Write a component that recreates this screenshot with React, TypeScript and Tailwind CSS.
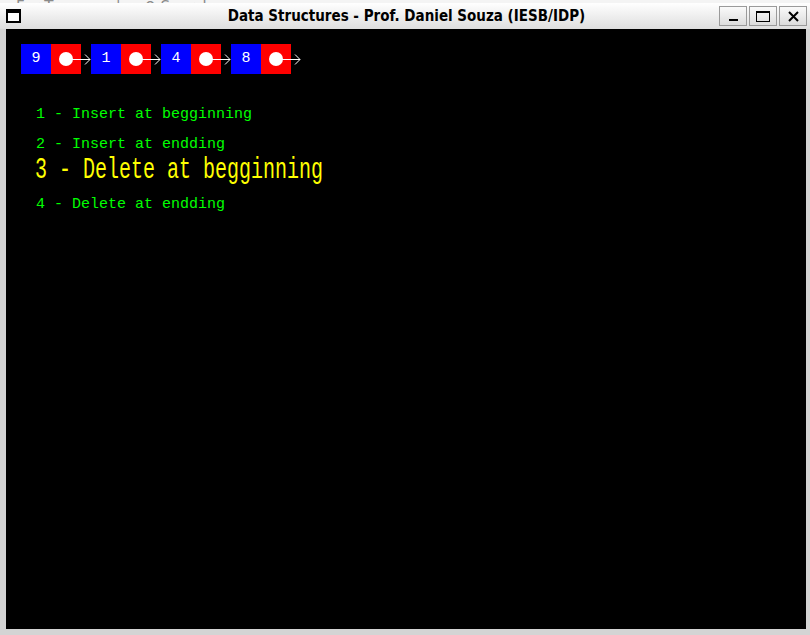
import React from 'react';

const nodes = [9, 1, 4, 8];
const menu = [
  '1 - Insert at begginning',
  '2 - Insert at endding',
  '3 - Delete at begginning',
  '4 - Delete at endding',
];
const selected = 2;

function WinButton({ children }: { children: React.ReactNode }) {
  return (
    <div className="w-[28px] h-[20px] border border-[#9a9a9a] bg-gradient-to-b from-[#fafafa] to-[#dcdcdc] flex items-center justify-center">
      {children}
    </div>
  );
}

export default function App() {
  return (
    <div className="w-[810px] h-[635px] bg-[#d4d4d4] flex flex-col overflow-hidden">
      {/* sliver of the window behind */}
      <div className="h-[3px] bg-[#f4f4f4] overflow-hidden flex items-end pl-[16px] gap-[24px] text-[15px] leading-[15px] text-[#8a8a8a] font-['DejaVu_Sans',sans-serif]">
        <span className="translate-y-[12px]">For Teams</span>
        <span className="translate-y-[12px]">|</span>
        <span className="translate-y-[12px]">⚲ Search…</span>
      </div>
      {/* title bar */}
      <div className="h-[26px] bg-gradient-to-b from-white to-[#dedede] grid grid-cols-[1fr_auto_1fr] items-center pl-[6px] pr-[3px]">
        <div className="w-[15px] h-[14px] border-2 border-black border-t-[4px] bg-white" />
        <div className="font-['DejaVu_Sans_Condensed','DejaVu_Sans',sans-serif] font-bold text-[15px] text-black">
          Data Structures - Prof. Daniel Souza (IESB/IDP)
        </div>
        <div className="flex gap-[2px] justify-end">
          <WinButton>
            <div className="w-[9px] h-[2px] bg-black mt-[8px]" />
          </WinButton>
          <WinButton>
            <div className="w-[14px] h-[11px] border border-black border-t-2" />
          </WinButton>
          <WinButton>
            <svg width="11" height="11" viewBox="0 0 11 11">
              <path d="M1 1 L10 10 M10 1 L1 10" stroke="black" strokeWidth="2" />
            </svg>
          </WinButton>
        </div>
      </div>
      {/* canvas */}
      <div className="flex-1 ml-[6px] mr-[4px] mb-[6px] bg-black flex flex-col">
        <div className="flex items-center pl-[15px] pt-[15px]">
          {nodes.map((n) => (
            <div key={n} className="flex items-center">
              <div className="w-[30px] h-[30px] bg-[#0000ff] flex items-center justify-center text-white text-[15px] font-['Liberation_Mono',monospace]">
                {n}
              </div>
              <div className="w-[30px] h-[30px] bg-[#ff0000] relative">
                <div className="absolute left-[8px] top-[8px] w-[14px] h-[14px] rounded-full bg-white" />
                <svg width="25" height="30" viewBox="0 0 25 30" className="absolute left-[15px] top-0">
                  <line x1="0" y1="15.5" x2="24" y2="15.5" stroke="white" strokeWidth="1" />
                  <polyline points="19,10.5 24,15.5 19,20.5" fill="none" stroke="white" strokeWidth="1" />
                </svg>
              </div>
              <div className="w-[10px]" />
            </div>
          ))}
        </div>
        <div className="flex flex-col pl-[30px] pt-[25px] font-['Liberation_Mono',monospace]">
          {menu.map((m, i) =>
            i === selected ? (
              <div key={m} className="h-[30px] flex items-center -ml-[1px] -mt-[4px] mb-[4px]">
                <span className="text-[20px] text-[#ffff00] leading-none whitespace-pre inline-block scale-y-[1.5] origin-center font-['Liberation_Mono',monospace]">
                  {m}
                </span>
              </div>
            ) : (
              <div key={m} className="h-[30px] flex items-center text-[15px] text-[#00ff00] whitespace-pre leading-none">
                {m}
              </div>
            )
          )}
        </div>
      </div>
    </div>
  );
}
